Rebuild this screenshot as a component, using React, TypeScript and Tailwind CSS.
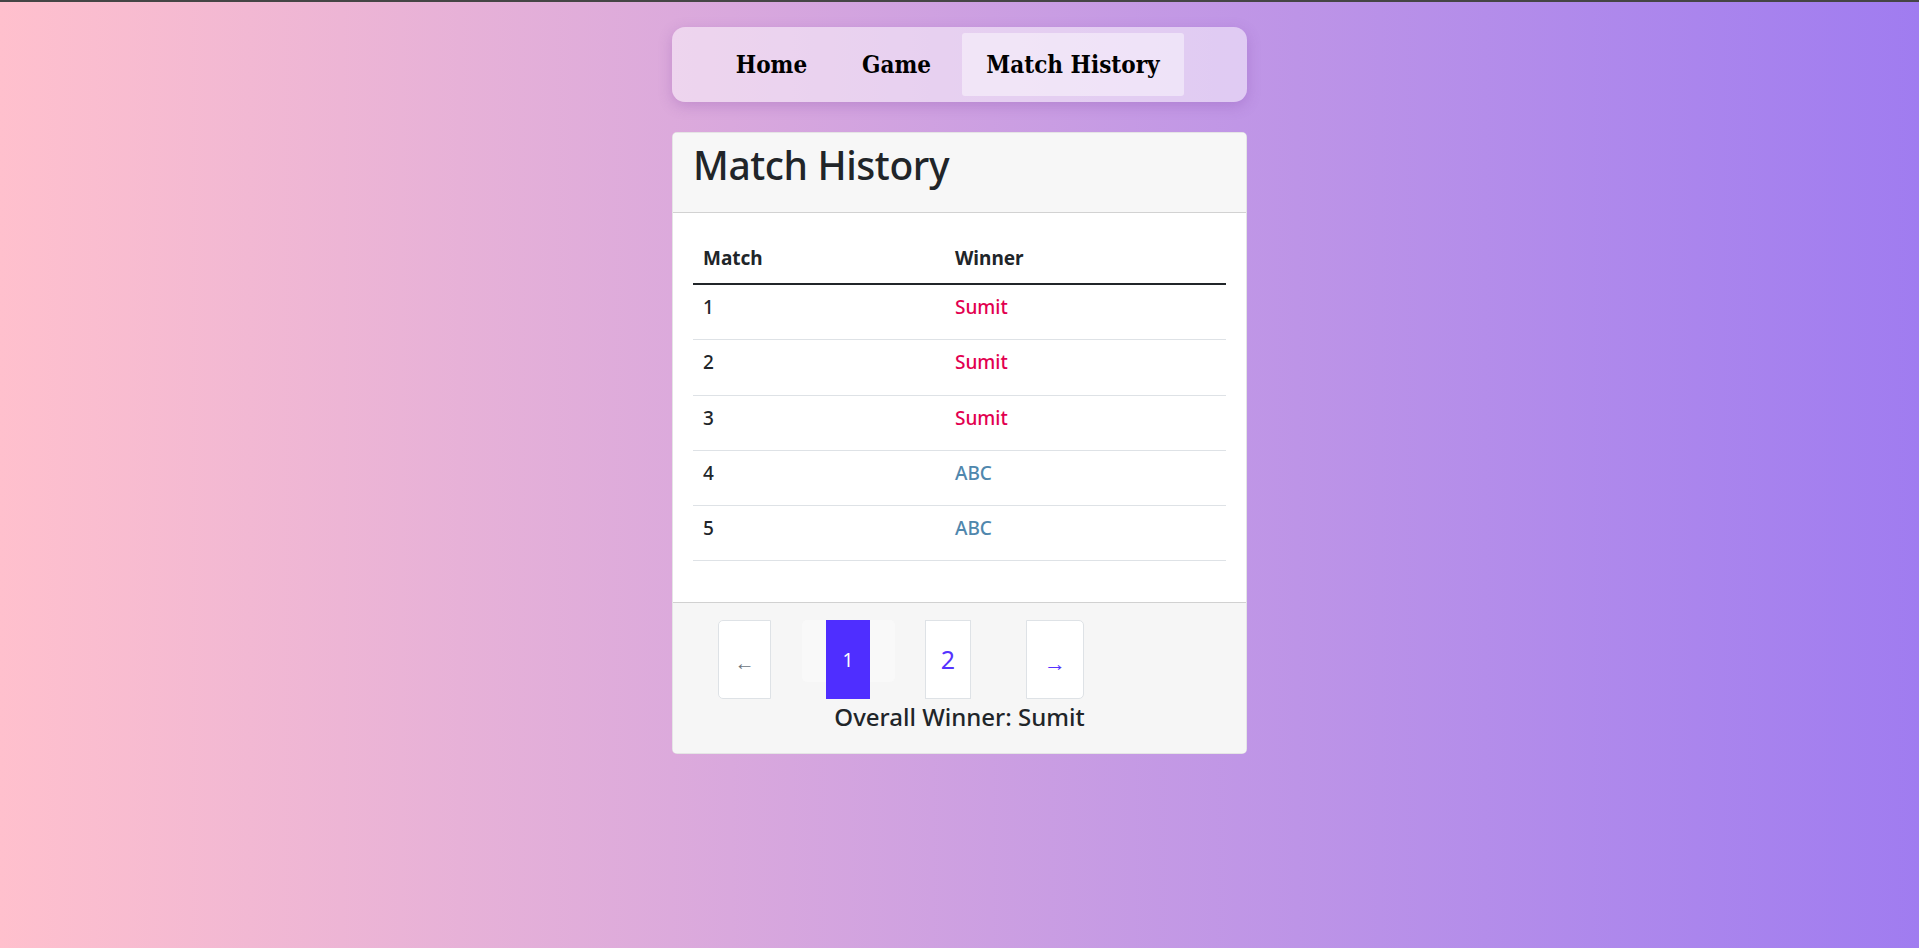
const matches = [
  { id: 1, winner: 'Sumit' },
  { id: 2, winner: 'Sumit' },
  { id: 3, winner: 'Sumit' },
  { id: 4, winner: 'ABC' },
  { id: 5, winner: 'ABC' },
]

const navItems = [
  { label: 'Home', width: 'w-[119px]', active: false },
  { label: 'Game', width: 'w-[117px]', active: false },
  { label: 'Match History', width: 'w-[222px]', active: true },
]

export default function App() {
  return (
    <div className="min-h-screen border-t-2 border-[#454545] bg-gradient-to-r from-[#ffc0cd] to-[#a07cf0] font-['Noto_Sans','Open_Sans',sans-serif] text-[#212529]">
      <div className="flex flex-col items-center pt-[25px]">
        {/* Nav bar */}
        <nav className="w-[575px] h-[75px] rounded-[13px] bg-white/50 shadow-[0_4px_14px_rgba(120,60,160,0.25)] pl-10 py-[6px] flex gap-[7px]">
          {navItems.map((item) => (
            <a
              key={item.label}
              href="#"
              className={`${item.width} h-[63px] flex items-center justify-center rounded-[3px] font-['DejaVu_Serif_Condensed','DejaVu_Serif',serif] font-bold text-[24px] text-black ${
                item.active ? 'bg-white/45' : ''
              }`}
            >
              {item.label}
            </a>
          ))}
        </nav>

        {/* Card */}
        <div className="mt-[30px] w-[575px] rounded-[5px] border border-black/10 bg-white overflow-hidden">
          <div className="bg-[#f7f7f7] border-b border-black/15 px-5 pt-[8px] pb-[23px]">
            <h1 className="text-[39px] leading-[48px] font-medium text-[#212529] tracking-[-0.4px]">Match History</h1>
          </div>

          <div className="px-5 pt-5 pb-[41px]">
            <table className="w-full leading-[30px]">
              <thead>
                <tr className="border-b-2 border-[#212529]">
                  <th className="w-[251px] text-left font-bold pl-[10px] pr-3 py-[10px] text-[19px]">Match</th>
                  <th className="text-left font-bold pl-[11px] pr-3 py-[10px] text-[19px]">Winner</th>
                </tr>
              </thead>
              <tbody>
                {matches.map((m) => (
                  <tr key={m.id} className="border-b border-[#dee2e6]">
                    <td className="pl-[10px] pr-3 pt-[7px] pb-[17.3px] font-medium text-[19px]">{m.id}</td>
                    <td
                      className={`pl-[11px] pr-3 pt-[7px] pb-[17.3px] font-medium text-[19px] ${
                        m.winner === 'Sumit' ? 'text-[#e2004f]' : 'text-[#4f87ad]'
                      }`}
                    >
                      {m.winner}
                    </td>
                  </tr>
                ))}
              </tbody>
            </table>
          </div>

          {/* Footer */}
          <div className="bg-[#f6f6f6] border-t border-black/15 pt-[17px] pb-[18px]">
            <div className="flex items-start pl-[45px]">
              <button className="w-[53px] h-[79px] flex items-center justify-center bg-white border border-[#dee2e6] rounded-l-[5px] text-[#6c757d] text-[20px] pt-[6px]">
                ←
              </button>
              <div className="ml-[31px] w-[93px] h-[62px] rounded-[5px] bg-[#f9f9f9] pl-[24px]">
                <span className="w-[44px] h-[79px] flex items-center justify-center bg-[#4f2eff] text-white text-[19px]">
                  1
                </span>
              </div>
              <button className="ml-[30px] w-[46px] h-[79px] flex items-center justify-center bg-white border border-[#dee2e6] text-[#5533ff] text-[25px]">
                2
              </button>
              <button className="ml-[55px] w-[58px] h-[79px] flex items-center justify-center bg-white border border-[#dee2e6] rounded-r-[5px] text-[#5533ff] text-[22px] pt-[6px]">
                →
              </button>
            </div>
            <p className="text-center text-[24px] leading-[36px] font-medium">Overall Winner: Sumit</p>
          </div>
        </div>
      </div>
    </div>
  )
}
